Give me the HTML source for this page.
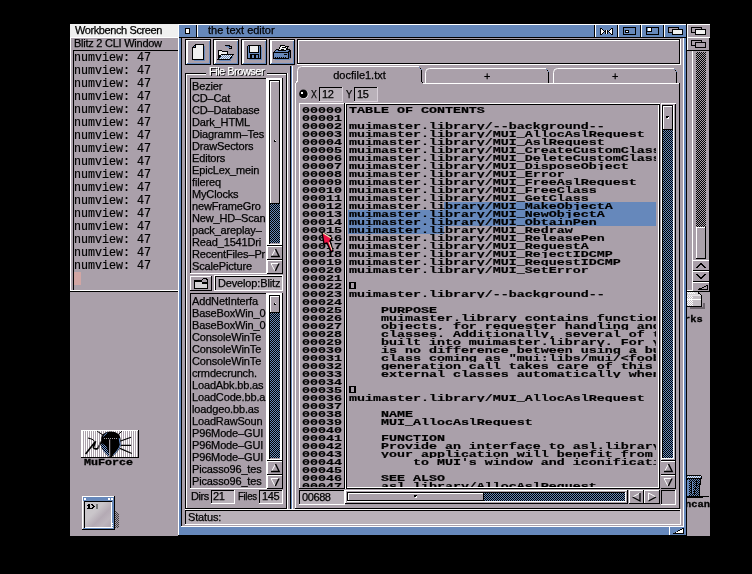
<!DOCTYPE html>
<html><head><meta charset="utf-8"><title>the text editor</title>
<style>
html,body{margin:0;padding:0;background:#000;}
body{width:752px;height:574px;overflow:hidden;position:relative;font-family:"Liberation Sans",sans-serif;}
#root{position:absolute;left:0;top:0;width:752px;height:574px;overflow:hidden;background:#000;will-change:transform;}
#root div,#root svg{position:absolute;}
.s{font:11px/13px "Liberation Sans",sans-serif;letter-spacing:-0.4px;color:#000;white-space:nowrap;-webkit-text-stroke:0.25px #000;}
.cli{font:13px/13px "Liberation Mono",monospace;color:#000;white-space:pre;-webkit-text-stroke:0.2px #000;transform:scaleX(0.897);transform-origin:0 0;}
.tp{font:bold 9.7px/9px "Liberation Mono",monospace;color:#000;white-space:pre;-webkit-text-stroke:0.2px #000;transform:scaleX(1.3746);transform-origin:0 0;height:9px;left:0;top:0;}
.ln{height:8px;overflow:hidden;}
.tz{font:bold 10.6px/10px "Liberation Mono",monospace;color:#000;white-space:pre;-webkit-text-stroke:0.3px #000;transform-origin:0 0;}
</style></head><body><div id="root">
<div style="left:70px;top:24px;width:640px;height:512px;background:#aaa0aa;"></div>
<div style="left:70px;top:24px;width:640px;height:13px;background:#f0f0f0;"></div>
<div style="left:70px;top:37px;width:640px;height:1px;background:#ffffff;"></div>
<div class="s" style="left:75px;top:24px;">Workbench Screen</div>
<div style="left:687px;top:24px;width:23px;height:14px;background:#aaa0aa;"></div>
<div style="left:687px;top:24px;width:23px;height:1px;background:#ffffff;"></div>
<div style="left:687px;top:24px;width:1px;height:14px;background:#ffffff;"></div>
<div style="left:687px;top:37px;width:23px;height:1px;background:#ffffff;"></div>
<div style="left:691px;top:27px;width:11px;height:6px;border:1px solid #000000;box-sizing:border-box;background:#aaa0aa;"></div>
<div style="left:695px;top:29px;width:11px;height:6px;border:1px solid #000000;box-sizing:border-box;background:#f0f0f0;"></div>
<div style="left:70px;top:38px;width:1px;height:254px;background:#ffffff;"></div>
<div class="s" style="left:74px;top:37px;letter-spacing:-0.25px;">Blitz 2 CLI Window</div>
<div style="left:73px;top:50px;width:620px;height:1px;background:#000000;"></div>
<div style="left:73px;top:50px;width:1px;height:241px;background:#000000;"></div>
<div style="left:71px;top:290px;width:622px;height:1px;background:#ffffff;"></div>
<div style="left:70px;top:291px;width:640px;height:1px;background:#000000;"></div>
<div style="left:687px;top:38px;width:1px;height:13px;background:#ffffff;"></div>
<div style="left:687px;top:50px;width:23px;height:1px;background:#000000;"></div>
<div style="left:691px;top:40px;width:11px;height:6px;border:1px solid #000000;box-sizing:border-box;background:#aaa0aa;"></div>
<div style="left:695px;top:42px;width:11px;height:6px;border:1px solid #000000;box-sizing:border-box;background:#aaa0aa;"></div>
<div style="left:692px;top:51px;width:1px;height:240px;background:#ffffff;"></div>
<div style="left:709px;top:38px;width:1px;height:254px;background:#000000;"></div>
<div style="left:696px;top:52px;width:10px;height:175px;background-image:conic-gradient(#000000 25%,#aaa0aa 0 50%,#000000 0 75%,#aaa0aa 0);background-size:2px 2px;"></div>
<div style="left:696px;top:227px;width:10px;height:32px;background:#aaa0aa;"></div>
<div style="left:696px;top:227px;width:10px;height:1px;background:#ffffff;"></div>
<div style="left:696px;top:227px;width:1px;height:32px;background:#ffffff;"></div>
<div style="left:696px;top:258px;width:10px;height:1px;background:#000000;"></div>
<div style="left:705px;top:227px;width:1px;height:32px;background:#000000;"></div>
<div style="left:693px;top:260px;width:16px;height:1px;background:#ffffff;"></div>
<div style="left:693px;top:271px;width:16px;height:1px;background:#ffffff;"></div>
<div style="left:693px;top:282px;width:16px;height:1px;background:#ffffff;"></div>
<div style="left:693px;top:270px;width:16px;height:1px;background:#000000;"></div>
<div style="left:693px;top:281px;width:16px;height:1px;background:#000000;"></div>
<svg style="left:693px;top:260px" width="17" height="31" viewBox="0 0 17 31" shape-rendering="crispEdges"><path d="M3.5 8 L8 3.5 L12.5 8" fill="none" stroke="#000000" stroke-width="2"/><path d="M3.5 14 L8 18.5 L12.5 14" fill="none" stroke="#000000" stroke-width="2"/><path d="M5.5 29.5 H14.5 V25.5 Z" fill="#aaa0aa" stroke="#000000" stroke-width="1"/></svg>
<div class="cli" style="left:74px;top:51px;">numview: 47</div>
<div class="cli" style="left:74px;top:64px;">numview: 47</div>
<div class="cli" style="left:74px;top:77px;">numview: 47</div>
<div class="cli" style="left:74px;top:90px;">numview: 47</div>
<div class="cli" style="left:74px;top:103px;">numview: 47</div>
<div class="cli" style="left:74px;top:116px;">numview: 47</div>
<div class="cli" style="left:74px;top:129px;">numview: 47</div>
<div class="cli" style="left:74px;top:142px;">numview: 47</div>
<div class="cli" style="left:74px;top:155px;">numview: 47</div>
<div class="cli" style="left:74px;top:168px;">numview: 47</div>
<div class="cli" style="left:74px;top:181px;">numview: 47</div>
<div class="cli" style="left:74px;top:194px;">numview: 47</div>
<div class="cli" style="left:74px;top:207px;">numview: 47</div>
<div class="cli" style="left:74px;top:220px;">numview: 47</div>
<div class="cli" style="left:74px;top:233px;">numview: 47</div>
<div class="cli" style="left:74px;top:246px;">numview: 47</div>
<div class="cli" style="left:74px;top:259px;">numview: 47</div>
<div style="left:74px;top:272px;width:7px;height:13px;background:#d2a6a4;"></div>
<svg style="left:687px;top:292px" width="23" height="18" viewBox="0 0 23 18" shape-rendering="crispEdges"><defs><pattern id="dl" width="2" height="2" patternUnits="userSpaceOnUse"><rect width="1" height="1" fill="#ffffff"/><rect x="1" y="1" width="1" height="1" fill="#ffffff"/></pattern></defs><path d="M16 11 H18 V17 H3 V15 H16 Z" fill="#6e666e"/><path d="M0 0 H11 L15 3 V15 H0 Z" fill="#c4bec4"/><path d="M0 0 H11 L14 3 H0 Z" fill="#d8d4d8"/><rect x="0" y="0" width="8" height="2" fill="url(#dl)"/><rect x="0" y="4" width="6" height="10" fill="url(#dl)"/><path d="M0 7.5H14" stroke="#ffffff"/><path d="M0 3.5H14" stroke="#e8e4e8"/><path d="M11 0.5 L14.5 3.5 V15M0 14.5H15" stroke="#000000" fill="none"/></svg>
<div style="left:687px;top:312px;width:23px;height:14px;overflow:hidden"><div class="tz" style="left:-2.8px;top:3px;font-size:9.6px;transform:scaleX(1.08);">rks</div></div>
<svg style="left:687px;top:475px" width="23" height="24" viewBox="0 0 23 24" shape-rendering="crispEdges"><rect x="0" y="1" width="14" height="3" fill="url(#dw)"/><path d="M0 4 H14 L12.5 21 H0 Z" fill="url(#dk)"/><rect x="0" y="5" width="2" height="16" fill="#6688bb"/><path d="M0 0.5H14M14.5 1V4M0 3.5H15M13.5 4V9M12.5 9V21M0 21.5H22M0 22.5H16" stroke="#000000" fill="none"/><path d="M4.5 7V19M9 6V12" stroke="#000000"/><path d="M5.5 7V19" stroke="#6688bb"/><path d="M8.5 12 L7.5 19" stroke="#000000"/></svg>
<div style="left:687px;top:497px;width:23px;height:14px;overflow:hidden"><div class="tz" style="left:-2.3px;top:2.5px;font-size:9.6px;transform:scaleX(1.09);">ncan</div></div>
<div style="left:81px;top:430px;width:58px;height:28px;background-image:repeating-linear-gradient(90deg,#aaa0aa 0 1px,#ffffff 1px 2px);"></div>
<div style="left:81px;top:430px;width:58px;height:1px;background:#ffffff;"></div>
<div style="left:81px;top:430px;width:1px;height:28px;background:#ffffff;"></div>
<div style="left:82px;top:430px;width:1px;height:28px;background:#ffffff;"></div>
<div style="left:81px;top:457px;width:58px;height:1px;background:#000000;"></div>
<div style="left:138px;top:430px;width:1px;height:28px;background:#000000;"></div>
<svg style="left:81px;top:430px" width="58" height="28" viewBox="0 0 58 28"><defs><pattern id="dz" width="2" height="2" patternUnits="userSpaceOnUse"><rect width="2" height="2" fill="#000000"/><rect width="1" height="1" fill="#7aa0dc"/><rect x="1" y="1" width="1" height="1" fill="#7aa0dc"/></pattern></defs><g stroke="#000000" stroke-width="1" fill="none"><path d="M22.9 5.6 L16.2 1.2 M36.5 5.2 L40.9 1.2"/><path d="M38.9 11.2 L50.1 7.2 M39.7 15.4 H50.1 M38.9 18.4 L50.9 23.5" stroke-width="1.2"/><path d="M4.6 23.9 L14.6 11.2 M14.6 11.2 L12.4 17.6 Q13.6 19.6 16.8 18.4 L20.6 11.4" stroke-width="1.6"/><path d="M7 8 L11 9.2 L13.4 11" stroke-width="1"/><path d="M19 12 L17.5 19" stroke="#777077" stroke-width="1"/></g><path d="M29.7 1.4 C35.5 1.4 39.6 4.5 39.6 9.5 V15.5 C39.6 19 34 24 30.9 26.9 H28.3 C25 24 20.2 19 20.2 15.5 V9.5 C20.2 4.5 24 1.4 29.7 1.4Z" fill="#000000"/><path d="M20.2 13 V15.5 C20.2 19 25 24 27.8 26.6 L28.2 24.5 L25.2 16 Z" fill="url(#dz)"/><path d="M38.2 8.2 L39.3 14.8 C38.5 18.5 35 22 32.3 25.2" stroke="#6f96d4" stroke-width="1" fill="none"/><path d="M22.4 6.4 L26.3 2.5" stroke="#6f96d4" stroke-width="1" fill="none"/><path d="M28.7 9.5 V26.5" stroke="#c8c0c8" stroke-width="1"/><path d="M23 8.5 H36" stroke="#a8a0a8" stroke-width="1" stroke-dasharray="1 1"/></svg>
<div class="tz" style="left:84px;top:458px;font-size:9.6px;transform:scaleX(1.215);">MuForce</div>
<div style="left:82px;top:496px;width:33px;height:34px;background:#c9c5c9;"></div>
<div style="left:85px;top:502px;width:26px;height:25px;background:linear-gradient(135deg,#cac6ca 0 38%,#b4aab4 62%,#bdb5bd 80%,#b0a6b0 100%);"></div>
<div style="left:83px;top:497px;width:31px;height:4px;background:#6688bb;"></div>
<div style="left:82px;top:496px;width:33px;height:1px;background:#ffffff;"></div>
<div style="left:82px;top:496px;width:1px;height:34px;background:#ffffff;"></div>
<div style="left:84px;top:501px;width:28px;height:1px;background:#000000;"></div>
<div style="left:84px;top:501px;width:1px;height:27px;background:#000000;"></div>
<div style="left:112px;top:501px;width:2px;height:27px;background:#6688bb;"></div>
<div style="left:111px;top:502px;width:1px;height:26px;background:#ffffff;"></div>
<div style="left:85px;top:527px;width:27px;height:1px;background:#ffffff;"></div>
<div style="left:83px;top:528px;width:31px;height:1px;background:#6688bb;"></div>
<div style="left:82px;top:529px;width:33px;height:1px;background:#000000;"></div>
<div style="left:114px;top:496px;width:1px;height:34px;background:#000000;"></div>
<div style="left:84px;top:498px;width:2px;height:2px;background:#ffffff;"></div>
<div style="left:108px;top:498px;width:2px;height:2px;background:#ffffff;"></div>
<div style="left:111px;top:498px;width:2px;height:2px;background:#ffffff;"></div>
<div style="left:112px;top:523px;width:1px;height:1px;background:#ffffff;"></div>
<div style="left:112px;top:525px;width:1px;height:1px;background:#ffffff;"></div>
<div style="left:112px;top:527px;width:1px;height:1px;background:#ffffff;"></div>
<svg style="left:82px;top:496px" width="38" height="34" viewBox="0 0 38 34" shape-rendering="crispEdges"><defs><pattern id="ds" width="2" height="2" patternUnits="userSpaceOnUse"><rect width="1" height="1" fill="#403c40"/><rect x="1" y="1" width="1" height="1" fill="#403c40"/></pattern></defs><path d="M33 14 L37 19 V32 H33 Z" fill="url(#ds)"/><g fill="#000"><rect x="6" y="8" width="1" height="1"/><rect x="7" y="8" width="1" height="1"/><rect x="5" y="9" width="1" height="1"/><rect x="6" y="9" width="1" height="1"/><rect x="7" y="9" width="1" height="1"/><rect x="6" y="10" width="1" height="1"/><rect x="7" y="10" width="1" height="1"/><rect x="6" y="11" width="1" height="1"/><rect x="7" y="11" width="1" height="1"/><rect x="5" y="12" width="1" height="1"/><rect x="6" y="12" width="1" height="1"/><rect x="7" y="12" width="1" height="1"/><rect x="8" y="12" width="1" height="1"/><rect x="9" y="8" width="1" height="1"/><rect x="10" y="8" width="1" height="1"/><rect x="10" y="9" width="1" height="1"/><rect x="11" y="9" width="1" height="1"/><rect x="11" y="10" width="1" height="1"/><rect x="12" y="10" width="1" height="1"/><rect x="10" y="11" width="1" height="1"/><rect x="11" y="11" width="1" height="1"/><rect x="9" y="12" width="1" height="1"/><rect x="10" y="12" width="1" height="1"/></g><rect x="14" y="8" width="2" height="5" fill="#777"/></svg>
<div style="left:178px;top:24px;width:509px;height:512px;background:#aaa0aa;"></div>
<div style="left:178px;top:24px;width:509px;height:14px;background:#6688bb;"></div>
<div style="left:178px;top:24px;width:509px;height:1px;background:#ffffff;"></div>
<div style="left:178px;top:37px;width:509px;height:1px;background:#000000;"></div>
<div style="left:178px;top:24px;width:1px;height:512px;background:#ffffff;"></div>
<div style="left:179px;top:38px;width:2px;height:489px;background:#6688bb;"></div>
<div style="left:181px;top:38px;width:1px;height:489px;background:#000000;"></div>
<div style="left:683px;top:38px;width:1px;height:489px;background:#ffffff;"></div>
<div style="left:684px;top:38px;width:2px;height:489px;background:#6688bb;"></div>
<div style="left:686px;top:24px;width:1px;height:512px;background:#000000;"></div>
<div style="left:181px;top:526px;width:503px;height:1px;background:#ffffff;"></div>
<div style="left:179px;top:527px;width:507px;height:8px;background:#6688bb;"></div>
<div style="left:178px;top:535px;width:509px;height:1px;background:#000000;"></div>
<div style="left:669px;top:527px;width:1px;height:8px;background:#ffffff;"></div>
<svg style="left:670px;top:527px" width="16" height="8" viewBox="0 0 16 8" shape-rendering="crispEdges"><path d="M2 7 H14 V0.5 Z" fill="#000000"/><path d="M5 6 H13 V2 Z" fill="#ffffff"/></svg>
<div style="left:196px;top:25px;width:1px;height:12px;background:#000000;"></div>
<div style="left:197px;top:25px;width:1px;height:12px;background:#ffffff;"></div>
<div style="left:185px;top:28px;width:5px;height:6px;background:#ffffff;border:1px solid #000000;box-sizing:border-box;"></div>
<div class="s" style="left:208px;top:24px;letter-spacing:0;">the text editor</div>
<div style="left:594px;top:25px;width:1px;height:12px;background:#000000;"></div>
<div style="left:595px;top:25px;width:1px;height:12px;background:#ffffff;"></div>
<div style="left:617px;top:25px;width:1px;height:12px;background:#000000;"></div>
<div style="left:618px;top:25px;width:1px;height:12px;background:#ffffff;"></div>
<div style="left:640px;top:25px;width:1px;height:12px;background:#000000;"></div>
<div style="left:641px;top:25px;width:1px;height:12px;background:#ffffff;"></div>
<div style="left:663px;top:25px;width:1px;height:12px;background:#000000;"></div>
<div style="left:664px;top:25px;width:1px;height:12px;background:#ffffff;"></div>
<svg style="left:595px;top:24px" width="92" height="14" viewBox="0 0 92 14" shape-rendering="crispEdges"><path d="M5.5 4V11M17.5 4V11" stroke="#000000"/><path d="M6 5 H7 V6 H8 V7 H9 V8 H8 V9 H7 V10 H6 Z" fill="#ffffff"/><path d="M17 5 H16 V6 H15 V7 H14 V8 H15 V9 H16 V10 H17 Z" fill="#ffffff"/><path d="M6 4 H7 V5 H8 V6 H9 V7 H10 V8 H9 V9 H8 V10 H7 V11 H6 V10 H7 V9 H8 V8 H9 V7 H8 V6 H7 V5 H6Z" fill="#000000"/><path d="M17 4 H16 V5 H15 V6 H14 V7 H13 V8 H14 V9 H15 V10 H16 V11 H17 V10 H16 V9 H15 V8 H14 V7 H15 V6 H16 V5 H17Z" fill="#000000"/><rect x="10" y="6" width="3" height="4" fill="#000000"/><rect x="11" y="6" width="1" height="4" fill="#ffffff"/><rect x="28.5" y="3.5" width="12" height="7" fill="#6688bb" stroke="#000000"/><rect x="30.5" y="6.5" width="3" height="2" fill="#ffffff" stroke="#000000"/><rect x="51.5" y="3.5" width="12" height="7" fill="#6688bb" stroke="#000000"/><rect x="51.5" y="3.5" width="5" height="4" fill="#6688bb" stroke="#000000"/><rect x="53" y="4" width="3" height="3" fill="#ffffff"/><rect x="73.5" y="3.5" width="10" height="5" fill="#aaa0aa" stroke="#000000"/><rect x="77.5" y="5.5" width="10" height="5" fill="#f0f0f0" stroke="#000000"/></svg>
<svg width="0" height="0" style="left:0;top:0"><defs><pattern id="dw" width="2" height="2" patternUnits="userSpaceOnUse"><rect width="2" height="2" fill="#6688bb"/><rect width="1" height="1" fill="#f0f0f0"/><rect x="1" y="1" width="1" height="1" fill="#f0f0f0"/></pattern><pattern id="dk" width="2" height="2" patternUnits="userSpaceOnUse"><rect width="2" height="2" fill="#6688bb"/><rect width="1" height="1" fill="#000000"/><rect x="1" y="1" width="1" height="1" fill="#000000"/></pattern></defs></svg>
<div style="left:185px;top:39px;width:26px;height:26px;background:#aaa0aa;"></div>
<div style="left:185px;top:39px;width:26px;height:1px;background:#000000;"></div>
<div style="left:185px;top:39px;width:1px;height:26px;background:#000000;"></div>
<div style="left:185px;top:64px;width:26px;height:1px;background:#000000;"></div>
<div style="left:210px;top:39px;width:1px;height:26px;background:#000000;"></div>
<div style="left:186px;top:40px;width:24px;height:1px;background:#ffffff;"></div>
<div style="left:186px;top:40px;width:1px;height:24px;background:#ffffff;"></div>
<div style="left:187px;top:40px;width:1px;height:24px;background:#ffffff;"></div>
<div style="left:187px;top:63px;width:23px;height:1px;background:#6688bb;"></div>
<div style="left:209px;top:41px;width:1px;height:23px;background:#6688bb;"></div>
<svg style="left:185px;top:39px" width="26" height="26" viewBox="0 0 26 26" shape-rendering="crispEdges"><path d="M10.5 5.5 H18.5 V20.5 H7.5 V8.5 Z" fill="#f0f0f0" stroke="#000000"/><path d="M7.5 8.5 H10.5 V5.5" fill="#6688bb" stroke="#000000"/><path d="M19.5 7V21.5H9" stroke="#6688bb" fill="none"/></svg>
<div style="left:213px;top:39px;width:26px;height:26px;background:#aaa0aa;"></div>
<div style="left:213px;top:39px;width:26px;height:1px;background:#000000;"></div>
<div style="left:213px;top:39px;width:1px;height:26px;background:#000000;"></div>
<div style="left:213px;top:64px;width:26px;height:1px;background:#000000;"></div>
<div style="left:238px;top:39px;width:1px;height:26px;background:#000000;"></div>
<div style="left:214px;top:40px;width:24px;height:1px;background:#ffffff;"></div>
<div style="left:214px;top:40px;width:1px;height:24px;background:#ffffff;"></div>
<div style="left:215px;top:40px;width:1px;height:24px;background:#ffffff;"></div>
<div style="left:215px;top:63px;width:23px;height:1px;background:#6688bb;"></div>
<div style="left:237px;top:41px;width:1px;height:23px;background:#6688bb;"></div>
<svg style="left:213px;top:39px" width="26" height="26" viewBox="0 0 26 26" shape-rendering="crispEdges"><path d="M5.5 11.5 H8.5 L9.5 12.5 H14.5 V16 H5.5Z" fill="#f0f0f0" stroke="#000000"/><path d="M5 20 L8 15.5 H20.5 L17 20 Z" fill="url(#dw)"/><path d="M4.5 20.5 L8.5 15.5 H20.5 L16.5 20.5 Z" fill="none" stroke="#000000"/><path d="M5.5 12V19" stroke="#000000"/><path d="M6 21.5H17L20 17.5" stroke="#6688bb" fill="none"/><path d="M11.5 7.5 Q14.5 4.5 17.5 8" stroke="#000000" fill="none" stroke-width="1.2"/><path d="M12.5 8.5 Q14.5 6 16.5 9" stroke="#6688bb" fill="none" stroke-width="1"/><path d="M15.5 9.5 H18.5 V6.5" stroke="#000000" fill="none"/></svg>
<div style="left:241px;top:39px;width:26px;height:26px;background:#aaa0aa;"></div>
<div style="left:241px;top:39px;width:26px;height:1px;background:#000000;"></div>
<div style="left:241px;top:39px;width:1px;height:26px;background:#000000;"></div>
<div style="left:241px;top:64px;width:26px;height:1px;background:#000000;"></div>
<div style="left:266px;top:39px;width:1px;height:26px;background:#000000;"></div>
<div style="left:242px;top:40px;width:24px;height:1px;background:#ffffff;"></div>
<div style="left:242px;top:40px;width:1px;height:24px;background:#ffffff;"></div>
<div style="left:243px;top:40px;width:1px;height:24px;background:#ffffff;"></div>
<div style="left:243px;top:63px;width:23px;height:1px;background:#6688bb;"></div>
<div style="left:265px;top:41px;width:1px;height:23px;background:#6688bb;"></div>
<svg style="left:241px;top:39px" width="26" height="26" viewBox="0 0 26 26" shape-rendering="crispEdges"><path d="M8 20.5 H20.5 V8" stroke="#6688bb" fill="none"/><path d="M7.5 6.5 H19.5 V19.5 H6.5 V7.5 Z" fill="#6688bb" stroke="#000000"/><rect x="9" y="7" width="8.5" height="5.5" fill="#f0f0f0"/><path d="M8.5 7V13.5H17.5V7" stroke="#000000" fill="none"/><rect x="9" y="15" width="9" height="5" fill="#000000"/><rect x="11" y="16" width="1.5" height="3" fill="#6688bb"/><rect x="15" y="16" width="1.5" height="3" fill="#6688bb"/></svg>
<div style="left:269px;top:39px;width:26px;height:26px;background:#aaa0aa;"></div>
<div style="left:269px;top:39px;width:26px;height:1px;background:#000000;"></div>
<div style="left:269px;top:39px;width:1px;height:26px;background:#000000;"></div>
<div style="left:269px;top:64px;width:26px;height:1px;background:#000000;"></div>
<div style="left:294px;top:39px;width:1px;height:26px;background:#000000;"></div>
<div style="left:270px;top:40px;width:24px;height:1px;background:#ffffff;"></div>
<div style="left:270px;top:40px;width:1px;height:24px;background:#ffffff;"></div>
<div style="left:271px;top:40px;width:1px;height:24px;background:#ffffff;"></div>
<div style="left:271px;top:63px;width:23px;height:1px;background:#6688bb;"></div>
<div style="left:293px;top:41px;width:1px;height:23px;background:#6688bb;"></div>
<svg style="left:269px;top:39px" width="26" height="26" viewBox="0 0 26 26" shape-rendering="crispEdges"><path d="M4.5 13.5 L7.5 10.5 H20.5 L21.5 12.5 V18.5 L19.5 19.5 H4.5 Z" fill="#6688bb" stroke="#000000"/><path d="M5 13 H19.5 L21 11.5" stroke="#000000" fill="none"/><path d="M19.5 13V19.5" stroke="#000000"/><path d="M20 13.5V18.5H21V13Z" fill="#3b5a93"/><path d="M11.5 6.5 L19.5 7.5 L16.5 11.5 L9.5 11.5 Z" fill="#f0f0f0" stroke="#000000"/><path d="M12.5 8.5 H17 M11.5 10H15" stroke="#000000"/><path d="M6 18.5H18" stroke="#000000" stroke-dasharray="1 1"/><path d="M15 15.5H18" stroke="#000000"/><path d="M6 20.5H20L22 19" stroke="#6688bb" fill="none"/></svg>
<div style="left:297px;top:39px;width:384px;height:1px;background:#000000;"></div>
<div style="left:297px;top:39px;width:1px;height:26px;background:#000000;"></div>
<div style="left:298px;top:40px;width:382px;height:1px;background:#ffffff;"></div>
<div style="left:298px;top:40px;width:1px;height:24px;background:#ffffff;"></div>
<div style="left:298px;top:63px;width:382px;height:1px;background:#000000;"></div>
<div style="left:679px;top:40px;width:1px;height:24px;background:#000000;"></div>
<div style="left:297px;top:64px;width:384px;height:1px;background:#ffffff;"></div>
<div style="left:680px;top:39px;width:1px;height:26px;background:#ffffff;"></div>
<div style="left:185px;top:73px;width:103px;height:1px;background:#000000;"></div>
<div style="left:185px;top:73px;width:1px;height:437px;background:#000000;"></div>
<div style="left:186px;top:74px;width:101px;height:1px;background:#ffffff;"></div>
<div style="left:186px;top:74px;width:1px;height:435px;background:#ffffff;"></div>
<div style="left:186px;top:508px;width:101px;height:1px;background:#000000;"></div>
<div style="left:286px;top:74px;width:1px;height:435px;background:#000000;"></div>
<div style="left:185px;top:509px;width:103px;height:1px;background:#ffffff;"></div>
<div style="left:287px;top:73px;width:1px;height:437px;background:#ffffff;"></div>
<div style="left:206px;top:68px;width:61px;height:12px;background:#aaa0aa;"></div>
<div class="s" style="left:209px;top:65px;color:#ffffff;text-shadow:1px 1px 0 #000000;-webkit-text-stroke:0.25px #ffffff;letter-spacing:-0.5px;">File Browser</div>
<div style="left:290px;top:66px;width:1px;height:443px;background:#000000;"></div>
<div style="left:291px;top:66px;width:1px;height:443px;background:#6688bb;"></div>
<div style="left:292px;top:66px;width:1px;height:443px;background:#ffffff;"></div>
<div style="left:190px;top:78px;width:77px;height:1px;background:#000000;"></div>
<div style="left:190px;top:78px;width:1px;height:196px;background:#000000;"></div>
<div style="left:190px;top:273px;width:77px;height:1px;background:#ffffff;"></div>
<div style="left:266px;top:78px;width:1px;height:196px;background:#ffffff;"></div>
<div class="s" style="left:192px;top:80px;letter-spacing:-0.15px;width:74px;overflow:hidden;">Bezier</div>
<div class="s" style="left:192px;top:92px;letter-spacing:-0.15px;width:74px;overflow:hidden;">CD–Cat</div>
<div class="s" style="left:192px;top:104px;letter-spacing:-0.15px;width:74px;overflow:hidden;">CD–Database</div>
<div class="s" style="left:192px;top:116px;letter-spacing:-0.15px;width:74px;overflow:hidden;">Dark_HTML</div>
<div class="s" style="left:192px;top:128px;letter-spacing:-0.15px;width:74px;overflow:hidden;">Diagramm–Tes</div>
<div class="s" style="left:192px;top:140px;letter-spacing:-0.15px;width:74px;overflow:hidden;">DrawSectors</div>
<div class="s" style="left:192px;top:152px;letter-spacing:-0.15px;width:74px;overflow:hidden;">Editors</div>
<div class="s" style="left:192px;top:164px;letter-spacing:-0.15px;width:74px;overflow:hidden;">EpicLex_mein</div>
<div class="s" style="left:192px;top:176px;letter-spacing:-0.15px;width:74px;overflow:hidden;">filereq</div>
<div class="s" style="left:192px;top:188px;letter-spacing:-0.15px;width:74px;overflow:hidden;">MyClocks</div>
<div class="s" style="left:192px;top:200px;letter-spacing:-0.15px;width:74px;overflow:hidden;">newFrameGro</div>
<div class="s" style="left:192px;top:212px;letter-spacing:-0.15px;width:74px;overflow:hidden;">New_HD–Scan</div>
<div class="s" style="left:192px;top:224px;letter-spacing:-0.15px;width:74px;overflow:hidden;">pack_areplay–</div>
<div class="s" style="left:192px;top:236px;letter-spacing:-0.15px;width:74px;overflow:hidden;">Read_1541Dri</div>
<div class="s" style="left:192px;top:248px;letter-spacing:-0.15px;width:74px;overflow:hidden;">RecentFiles–Pr</div>
<div class="s" style="left:192px;top:260px;letter-spacing:-0.15px;width:74px;overflow:hidden;">ScalePicture</div>
<div style="left:267px;top:78px;width:2px;height:168px;background:#ffffff;"></div>
<div style="left:267px;top:78px;width:15px;height:1px;background:#ffffff;"></div>
<div style="left:267px;top:79px;width:15px;height:1px;background:#ffffff;"></div>
<div style="left:269px;top:80px;width:1px;height:164px;background:#000000;"></div>
<div style="left:269px;top:80px;width:11px;height:1px;background:#000000;"></div>
<div style="left:270px;top:81px;width:10px;height:162px;background-image:conic-gradient(#000000 25%,#6688bb 0 50%,#000000 0 75%,#6688bb 0);background-size:2px 2px;"></div>
<div style="left:280px;top:80px;width:2px;height:165px;background:#ffffff;"></div>
<div style="left:269px;top:244px;width:13px;height:1px;background:#ffffff;"></div>
<div style="left:282px;top:78px;width:1px;height:168px;background:#000000;"></div>
<div style="left:267px;top:245px;width:16px;height:1px;background:#000000;"></div>
<div style="left:270px;top:81px;width:10px;height:123px;background:#aaa0aa;"></div>
<div style="left:270px;top:81px;width:10px;height:1px;background:#ffffff;"></div>
<div style="left:270px;top:81px;width:1px;height:123px;background:#ffffff;"></div>
<div style="left:270px;top:203px;width:10px;height:1px;background:#000000;"></div>
<div style="left:279px;top:81px;width:1px;height:123px;background:#000000;"></div>
<div style="left:274px;top:140px;width:2px;height:2px;background:#000000;"></div>
<div style="left:275px;top:140px;width:1px;height:1px;background:#ffffff;"></div>
<div style="left:267px;top:246px;width:16px;height:14px;background:#aaa0aa;"></div>
<div style="left:267px;top:246px;width:16px;height:1px;background:#ffffff;"></div>
<div style="left:267px;top:246px;width:1px;height:14px;background:#ffffff;"></div>
<div style="left:267px;top:259px;width:16px;height:1px;background:#000000;"></div>
<div style="left:282px;top:246px;width:1px;height:14px;background:#000000;"></div>
<svg style="left:267px;top:246px" width="16" height="14" viewBox="0 0 16 14"><path d="M8.5 3 L4.5 10.5" stroke="#ffffff" fill="none"/><path d="M8.5 3 L12.2 10.5 H4.0" stroke="#000000" stroke-width="1.4" fill="none"/></svg>
<div style="left:267px;top:260px;width:16px;height:14px;background:#aaa0aa;"></div>
<div style="left:267px;top:260px;width:16px;height:1px;background:#ffffff;"></div>
<div style="left:267px;top:260px;width:1px;height:14px;background:#ffffff;"></div>
<div style="left:267px;top:273px;width:16px;height:1px;background:#000000;"></div>
<div style="left:282px;top:260px;width:1px;height:14px;background:#000000;"></div>
<svg style="left:267px;top:260px" width="16" height="14" viewBox="0 0 16 14"><path d="M12.0 3.5 H4.0 L8.0 11" stroke="#ffffff" fill="none"/><path d="M8.3 11 L12.0 3.5" stroke="#000000" stroke-width="1.4" fill="none"/></svg>
<div style="left:190px;top:293px;width:77px;height:1px;background:#000000;"></div>
<div style="left:190px;top:293px;width:1px;height:196px;background:#000000;"></div>
<div style="left:190px;top:488px;width:77px;height:1px;background:#ffffff;"></div>
<div style="left:266px;top:293px;width:1px;height:196px;background:#ffffff;"></div>
<div class="s" style="left:192px;top:295px;letter-spacing:-0.15px;width:74px;overflow:hidden;">AddNetInterfa</div>
<div class="s" style="left:192px;top:307px;letter-spacing:-0.15px;width:74px;overflow:hidden;">BaseBoxWin_0</div>
<div class="s" style="left:192px;top:319px;letter-spacing:-0.15px;width:74px;overflow:hidden;">BaseBoxWin_0</div>
<div class="s" style="left:192px;top:331px;letter-spacing:-0.15px;width:74px;overflow:hidden;">ConsoleWinTe</div>
<div class="s" style="left:192px;top:343px;letter-spacing:-0.15px;width:74px;overflow:hidden;">ConsoleWinTe</div>
<div class="s" style="left:192px;top:355px;letter-spacing:-0.15px;width:74px;overflow:hidden;">ConsoleWinTe</div>
<div class="s" style="left:192px;top:367px;letter-spacing:-0.15px;width:74px;overflow:hidden;">crmdecrunch.</div>
<div class="s" style="left:192px;top:379px;letter-spacing:-0.15px;width:74px;overflow:hidden;">LoadAbk.bb.as</div>
<div class="s" style="left:192px;top:391px;letter-spacing:-0.15px;width:74px;overflow:hidden;">LoadCode.bb.a</div>
<div class="s" style="left:192px;top:403px;letter-spacing:-0.15px;width:74px;overflow:hidden;">loadgeo.bb.as</div>
<div class="s" style="left:192px;top:415px;letter-spacing:-0.15px;width:74px;overflow:hidden;">LoadRawSoun</div>
<div class="s" style="left:192px;top:427px;letter-spacing:-0.15px;width:74px;overflow:hidden;">P96Mode–GUI</div>
<div class="s" style="left:192px;top:439px;letter-spacing:-0.15px;width:74px;overflow:hidden;">P96Mode–GUI</div>
<div class="s" style="left:192px;top:451px;letter-spacing:-0.15px;width:74px;overflow:hidden;">P96Mode–GUI</div>
<div class="s" style="left:192px;top:463px;letter-spacing:-0.15px;width:74px;overflow:hidden;">Picasso96_tes</div>
<div class="s" style="left:192px;top:475px;letter-spacing:-0.15px;width:74px;overflow:hidden;">Picasso96_tes</div>
<div style="left:267px;top:293px;width:2px;height:168px;background:#ffffff;"></div>
<div style="left:267px;top:293px;width:15px;height:1px;background:#ffffff;"></div>
<div style="left:267px;top:294px;width:15px;height:1px;background:#ffffff;"></div>
<div style="left:269px;top:295px;width:1px;height:164px;background:#000000;"></div>
<div style="left:269px;top:295px;width:11px;height:1px;background:#000000;"></div>
<div style="left:270px;top:296px;width:10px;height:162px;background-image:conic-gradient(#000000 25%,#6688bb 0 50%,#000000 0 75%,#6688bb 0);background-size:2px 2px;"></div>
<div style="left:280px;top:295px;width:2px;height:165px;background:#ffffff;"></div>
<div style="left:269px;top:459px;width:13px;height:1px;background:#ffffff;"></div>
<div style="left:282px;top:293px;width:1px;height:168px;background:#000000;"></div>
<div style="left:267px;top:460px;width:16px;height:1px;background:#000000;"></div>
<div style="left:270px;top:296px;width:10px;height:17px;background:#aaa0aa;"></div>
<div style="left:270px;top:296px;width:10px;height:1px;background:#ffffff;"></div>
<div style="left:270px;top:296px;width:1px;height:17px;background:#ffffff;"></div>
<div style="left:270px;top:312px;width:10px;height:1px;background:#000000;"></div>
<div style="left:279px;top:296px;width:1px;height:17px;background:#000000;"></div>
<div style="left:274px;top:303px;width:2px;height:2px;background:#000000;"></div>
<div style="left:275px;top:303px;width:1px;height:1px;background:#ffffff;"></div>
<div style="left:267px;top:461px;width:16px;height:14px;background:#aaa0aa;"></div>
<div style="left:267px;top:461px;width:16px;height:1px;background:#ffffff;"></div>
<div style="left:267px;top:461px;width:1px;height:14px;background:#ffffff;"></div>
<div style="left:267px;top:474px;width:16px;height:1px;background:#000000;"></div>
<div style="left:282px;top:461px;width:1px;height:14px;background:#000000;"></div>
<svg style="left:267px;top:461px" width="16" height="14" viewBox="0 0 16 14"><path d="M8.5 3 L4.5 10.5" stroke="#ffffff" fill="none"/><path d="M8.5 3 L12.2 10.5 H4.0" stroke="#000000" stroke-width="1.4" fill="none"/></svg>
<div style="left:267px;top:475px;width:16px;height:14px;background:#aaa0aa;"></div>
<div style="left:267px;top:475px;width:16px;height:1px;background:#ffffff;"></div>
<div style="left:267px;top:475px;width:1px;height:14px;background:#ffffff;"></div>
<div style="left:267px;top:488px;width:16px;height:1px;background:#000000;"></div>
<div style="left:282px;top:475px;width:1px;height:14px;background:#000000;"></div>
<svg style="left:267px;top:475px" width="16" height="14" viewBox="0 0 16 14"><path d="M12.0 3.5 H4.0 L8.0 11" stroke="#ffffff" fill="none"/><path d="M8.3 11 L12.0 3.5" stroke="#000000" stroke-width="1.4" fill="none"/></svg>
<div style="left:190px;top:276px;width:22px;height:15px;background:#aaa0aa;"></div>
<div style="left:190px;top:276px;width:22px;height:1px;background:#ffffff;"></div>
<div style="left:190px;top:276px;width:1px;height:15px;background:#ffffff;"></div>
<div style="left:190px;top:290px;width:22px;height:1px;background:#000000;"></div>
<div style="left:211px;top:276px;width:1px;height:15px;background:#000000;"></div>
<svg style="left:190px;top:276px" width="22" height="15" viewBox="0 0 22 15" shape-rendering="crispEdges"><rect x="5" y="6" width="12" height="6" fill="#d6d2d6"/><path d="M11.5 4.5 L13.5 2.5 H16.5 L17.5 4.5 V6" fill="none" stroke="#000000"/><path d="M4 5 H12 M12 6.5 H17" stroke="#000000" stroke-width="2"/><path d="M4.5 4 V12.5 H17.5 V6" fill="none" stroke="#000000"/></svg>
<div style="left:214px;top:275px;width:69px;height:1px;background:#ffffff;"></div>
<div style="left:214px;top:275px;width:1px;height:16px;background:#ffffff;"></div>
<div style="left:215px;top:276px;width:68px;height:15px;background:#b9b1b9;"></div>
<div style="left:215px;top:276px;width:68px;height:1px;background:#000000;"></div>
<div style="left:215px;top:276px;width:1px;height:15px;background:#000000;"></div>
<div style="left:215px;top:290px;width:68px;height:1px;background:#ffffff;"></div>
<div style="left:282px;top:276px;width:1px;height:15px;background:#ffffff;"></div>
<div class="s" style="left:218px;top:277px;letter-spacing:-0.15px;">Develop:Blitz</div>
<div class="s" style="left:191px;top:490px;">Dirs</div>
<div style="left:211px;top:490px;width:24px;height:14px;background:#b9b1b9;"></div>
<div style="left:211px;top:490px;width:24px;height:1px;background:#000000;"></div>
<div style="left:211px;top:490px;width:1px;height:14px;background:#000000;"></div>
<div style="left:211px;top:503px;width:24px;height:1px;background:#ffffff;"></div>
<div style="left:234px;top:490px;width:1px;height:14px;background:#ffffff;"></div>
<div class="s" style="left:213px;top:490px;">21</div>
<div class="s" style="left:238px;top:490px;transform:scaleX(0.88);transform-origin:0 0;">Files</div>
<div style="left:259px;top:490px;width:24px;height:14px;background:#b9b1b9;"></div>
<div style="left:259px;top:490px;width:24px;height:1px;background:#000000;"></div>
<div style="left:259px;top:490px;width:1px;height:14px;background:#000000;"></div>
<div style="left:259px;top:503px;width:24px;height:1px;background:#ffffff;"></div>
<div style="left:282px;top:490px;width:1px;height:14px;background:#ffffff;"></div>
<div class="s" style="left:262px;top:490px;">145</div>
<div style="left:185px;top:509px;width:496px;height:1px;background:#ffffff;"></div>
<div style="left:185px;top:510px;width:496px;height:15px;background:#b9b1b9;"></div>
<div style="left:185px;top:510px;width:496px;height:1px;background:#000000;"></div>
<div style="left:185px;top:510px;width:1px;height:15px;background:#000000;"></div>
<div style="left:185px;top:524px;width:496px;height:1px;background:#ffffff;"></div>
<div style="left:680px;top:510px;width:1px;height:15px;background:#ffffff;"></div>
<div class="s" style="left:188px;top:511px;letter-spacing:-0.15px;">Status:</div>
<svg style="left:297px;top:66px" width="127" height="18" viewBox="0 0 127 18"><path d="M0.5 16 V4.5 Q0.5 0.5 4.5 0.5 H122" fill="none" stroke="#ffffff" stroke-width="1"/></svg>
<div style="left:419px;top:67px;width:1px;height:1px;background:#6688bb;"></div>
<div style="left:420px;top:68px;width:1px;height:1px;background:#000000;"></div>
<div style="left:421px;top:69px;width:1px;height:1px;background:#6688bb;"></div>
<div style="left:421px;top:70px;width:1px;height:12px;background:#000000;"></div>
<div style="left:422px;top:82px;width:1px;height:1px;background:#000000;"></div>
<svg style="left:425px;top:68px" width="126" height="16" viewBox="0 0 126 16"><path d="M0.5 15 V4.5 Q0.5 0.5 4.5 0.5 H121" fill="none" stroke="#ffffff" stroke-width="1"/></svg>
<div style="left:546px;top:69px;width:1px;height:1px;background:#6688bb;"></div>
<div style="left:547px;top:70px;width:1px;height:1px;background:#000000;"></div>
<div style="left:548px;top:71px;width:1px;height:1px;background:#6688bb;"></div>
<div style="left:548px;top:72px;width:1px;height:11px;background:#000000;"></div>
<svg style="left:553px;top:68px" width="126" height="16" viewBox="0 0 126 16"><path d="M0.5 15 V4.5 Q0.5 0.5 4.5 0.5 H121" fill="none" stroke="#ffffff" stroke-width="1"/></svg>
<div style="left:674px;top:69px;width:1px;height:1px;background:#6688bb;"></div>
<div style="left:675px;top:70px;width:1px;height:1px;background:#000000;"></div>
<div style="left:676px;top:71px;width:1px;height:1px;background:#6688bb;"></div>
<div style="left:676px;top:72px;width:1px;height:11px;background:#000000;"></div>
<div class="s" style="left:297px;top:69px;width:125px;text-align:center;letter-spacing:0;">docfile1.txt</div>
<div class="s" style="left:425px;top:70px;width:124px;text-align:center;">+</div>
<div class="s" style="left:553px;top:70px;width:124px;text-align:center;">+</div>
<div style="left:423px;top:83px;width:257px;height:1px;background:#ffffff;"></div>
<div style="left:295px;top:83px;width:1px;height:426px;background:#ffffff;"></div>
<div style="left:296px;top:81px;width:1px;height:2px;background:#ffffff;"></div>
<div style="left:295px;top:508px;width:385px;height:1px;background:#000000;"></div>
<div style="left:679px;top:83px;width:1px;height:426px;background:#000000;"></div>
<svg style="left:299px;top:89px" width="11" height="11" viewBox="0 0 11 11"><circle cx="4.8" cy="5.3" r="4.6" fill="#ffffff"/><circle cx="4.4" cy="4.9" r="4.3" fill="#000000"/><rect x="2" y="3" width="2" height="2" fill="#ffffff"/></svg>
<div class="s" style="left:311px;top:88px;transform:scaleX(0.8);transform-origin:0 0;">X</div>
<div style="left:319px;top:87px;width:24px;height:15px;background:#b9b1b9;"></div>
<div style="left:319px;top:87px;width:24px;height:1px;background:#000000;"></div>
<div style="left:319px;top:87px;width:1px;height:15px;background:#000000;"></div>
<div style="left:319px;top:101px;width:24px;height:1px;background:#d8d0d8;"></div>
<div style="left:342px;top:87px;width:1px;height:15px;background:#d8d0d8;"></div>
<div class="s" style="left:322px;top:88px;">12</div>
<div class="s" style="left:346px;top:88px;transform:scaleX(0.85);transform-origin:0 0;">Y</div>
<div style="left:354px;top:87px;width:24px;height:15px;background:#b9b1b9;"></div>
<div style="left:354px;top:87px;width:24px;height:1px;background:#000000;"></div>
<div style="left:354px;top:87px;width:1px;height:15px;background:#000000;"></div>
<div style="left:354px;top:101px;width:24px;height:1px;background:#d8d0d8;"></div>
<div style="left:377px;top:87px;width:1px;height:15px;background:#d8d0d8;"></div>
<div class="s" style="left:357px;top:88px;">15</div>
<div style="left:299px;top:103px;width:46px;height:1px;background:#ffffff;"></div>
<div style="left:299px;top:103px;width:1px;height:386px;background:#ffffff;"></div>
<div style="left:299px;top:488px;width:46px;height:1px;background:#000000;"></div>
<div style="left:344px;top:103px;width:1px;height:386px;background:#000000;"></div>
<div style="left:345px;top:103px;width:315px;height:1px;background:#ffffff;"></div>
<div style="left:345px;top:103px;width:1px;height:386px;background:#ffffff;"></div>
<div style="left:346px;top:104px;width:313px;height:1px;background:#000000;"></div>
<div style="left:346px;top:104px;width:1px;height:384px;background:#000000;"></div>
<div style="left:347px;top:487px;width:312px;height:1px;background:#ffffff;"></div>
<div style="left:658px;top:105px;width:1px;height:383px;background:#ffffff;"></div>
<div style="left:346px;top:488px;width:314px;height:1px;background:#000000;"></div>
<div style="left:659px;top:104px;width:1px;height:385px;background:#000000;"></div>
<div style="left:444px;top:202px;width:212px;height:8px;background:#6688bb;"></div>
<div style="left:348px;top:210px;width:308px;height:16px;background:#6688bb;"></div>
<div style="left:348px;top:226px;width:96px;height:8px;background:#6688bb;"></div>
<div style="left:300px;top:105px;width:44px;height:382px;overflow:hidden">
<div class="ln" style="left:2px;top:1px;width:42px"><div class="tp">00000</div></div>
<div class="ln" style="left:2px;top:9px;width:42px"><div class="tp">00001</div></div>
<div class="ln" style="left:2px;top:17px;width:42px"><div class="tp">00002</div></div>
<div class="ln" style="left:2px;top:25px;width:42px"><div class="tp">00003</div></div>
<div class="ln" style="left:2px;top:33px;width:42px"><div class="tp">00004</div></div>
<div class="ln" style="left:2px;top:41px;width:42px"><div class="tp">00005</div></div>
<div class="ln" style="left:2px;top:49px;width:42px"><div class="tp">00006</div></div>
<div class="ln" style="left:2px;top:57px;width:42px"><div class="tp">00007</div></div>
<div class="ln" style="left:2px;top:65px;width:42px"><div class="tp">00008</div></div>
<div class="ln" style="left:2px;top:73px;width:42px"><div class="tp">00009</div></div>
<div class="ln" style="left:2px;top:81px;width:42px"><div class="tp">00010</div></div>
<div class="ln" style="left:2px;top:89px;width:42px"><div class="tp">00011</div></div>
<div class="ln" style="left:2px;top:97px;width:42px"><div class="tp">00012</div></div>
<div class="ln" style="left:2px;top:105px;width:42px"><div class="tp">00013</div></div>
<div class="ln" style="left:2px;top:113px;width:42px"><div class="tp">00014</div></div>
<div class="ln" style="left:2px;top:121px;width:42px"><div class="tp">00015</div></div>
<div class="ln" style="left:2px;top:129px;width:42px"><div class="tp">00016</div></div>
<div class="ln" style="left:2px;top:137px;width:42px"><div class="tp">00017</div></div>
<div class="ln" style="left:2px;top:145px;width:42px"><div class="tp">00018</div></div>
<div class="ln" style="left:2px;top:153px;width:42px"><div class="tp">00019</div></div>
<div class="ln" style="left:2px;top:161px;width:42px"><div class="tp">00020</div></div>
<div class="ln" style="left:2px;top:169px;width:42px"><div class="tp">00021</div></div>
<div class="ln" style="left:2px;top:177px;width:42px"><div class="tp">00022</div></div>
<div class="ln" style="left:2px;top:185px;width:42px"><div class="tp">00023</div></div>
<div class="ln" style="left:2px;top:193px;width:42px"><div class="tp">00024</div></div>
<div class="ln" style="left:2px;top:201px;width:42px"><div class="tp">00025</div></div>
<div class="ln" style="left:2px;top:209px;width:42px"><div class="tp">00026</div></div>
<div class="ln" style="left:2px;top:217px;width:42px"><div class="tp">00027</div></div>
<div class="ln" style="left:2px;top:225px;width:42px"><div class="tp">00028</div></div>
<div class="ln" style="left:2px;top:233px;width:42px"><div class="tp">00029</div></div>
<div class="ln" style="left:2px;top:241px;width:42px"><div class="tp">00030</div></div>
<div class="ln" style="left:2px;top:249px;width:42px"><div class="tp">00031</div></div>
<div class="ln" style="left:2px;top:257px;width:42px"><div class="tp">00032</div></div>
<div class="ln" style="left:2px;top:265px;width:42px"><div class="tp">00033</div></div>
<div class="ln" style="left:2px;top:273px;width:42px"><div class="tp">00034</div></div>
<div class="ln" style="left:2px;top:281px;width:42px"><div class="tp">00035</div></div>
<div class="ln" style="left:2px;top:289px;width:42px"><div class="tp">00036</div></div>
<div class="ln" style="left:2px;top:297px;width:42px"><div class="tp">00037</div></div>
<div class="ln" style="left:2px;top:305px;width:42px"><div class="tp">00038</div></div>
<div class="ln" style="left:2px;top:313px;width:42px"><div class="tp">00039</div></div>
<div class="ln" style="left:2px;top:321px;width:42px"><div class="tp">00040</div></div>
<div class="ln" style="left:2px;top:329px;width:42px"><div class="tp">00041</div></div>
<div class="ln" style="left:2px;top:337px;width:42px"><div class="tp">00042</div></div>
<div class="ln" style="left:2px;top:345px;width:42px"><div class="tp">00043</div></div>
<div class="ln" style="left:2px;top:353px;width:42px"><div class="tp">00044</div></div>
<div class="ln" style="left:2px;top:361px;width:42px"><div class="tp">00045</div></div>
<div class="ln" style="left:2px;top:369px;width:42px"><div class="tp">00046</div></div>
<div class="ln" style="left:2px;top:377px;width:42px"><div class="tp">00047</div></div>
</div>
<div style="left:347px;top:105px;width:309px;height:382px;overflow:hidden">
<div class="ln" style="left:2px;top:1px;width:307px"><div class="tp">TABLE OF CONTENTS</div></div>
<div class="ln" style="left:2px;top:17px;width:307px"><div class="tp">muimaster.library/--background--</div></div>
<div class="ln" style="left:2px;top:25px;width:307px"><div class="tp">muimaster.library/MUI_AllocAslRequest</div></div>
<div class="ln" style="left:2px;top:33px;width:307px"><div class="tp">muimaster.library/MUI_AslRequest</div></div>
<div class="ln" style="left:2px;top:41px;width:307px"><div class="tp">muimaster.library/MUI_CreateCustomClass</div></div>
<div class="ln" style="left:2px;top:49px;width:307px"><div class="tp">muimaster.library/MUI_DeleteCustomClass</div></div>
<div class="ln" style="left:2px;top:57px;width:307px"><div class="tp">muimaster.library/MUI_DisposeObject</div></div>
<div class="ln" style="left:2px;top:65px;width:307px"><div class="tp">muimaster.library/MUI_Error</div></div>
<div class="ln" style="left:2px;top:73px;width:307px"><div class="tp">muimaster.library/MUI_FreeAslRequest</div></div>
<div class="ln" style="left:2px;top:81px;width:307px"><div class="tp">muimaster.library/MUI_FreeClass</div></div>
<div class="ln" style="left:2px;top:89px;width:307px"><div class="tp">muimaster.library/MUI_GetClass</div></div>
<div class="ln" style="left:2px;top:97px;width:307px"><div class="tp">muimaster.library/MUI_MakeObjectA</div></div>
<div class="ln" style="left:2px;top:105px;width:307px"><div class="tp">muimaster.library/MUI_NewObjectA</div></div>
<div class="ln" style="left:2px;top:113px;width:307px"><div class="tp">muimaster.library/MUI_ObtainPen</div></div>
<div class="ln" style="left:2px;top:121px;width:307px"><div class="tp">muimaster.library/MUI_Redraw</div></div>
<div class="ln" style="left:2px;top:129px;width:307px"><div class="tp">muimaster.library/MUI_ReleasePen</div></div>
<div class="ln" style="left:2px;top:137px;width:307px"><div class="tp">muimaster.library/MUI_RequestA</div></div>
<div class="ln" style="left:2px;top:145px;width:307px"><div class="tp">muimaster.library/MUI_RejectIDCMP</div></div>
<div class="ln" style="left:2px;top:153px;width:307px"><div class="tp">muimaster.library/MUI_RequestIDCMP</div></div>
<div class="ln" style="left:2px;top:161px;width:307px"><div class="tp">muimaster.library/MUI_SetError</div></div>
<div style="left:2px;top:177px;width:7px;height:7px;border:1px solid #000000;border-left-width:2px;border-right-width:2px;box-sizing:border-box"></div>
<div class="ln" style="left:2px;top:185px;width:307px"><div class="tp">muimaster.library/--background--</div></div>
<div class="ln" style="left:2px;top:201px;width:307px"><div class="tp">    PURPOSE</div></div>
<div class="ln" style="left:2px;top:209px;width:307px"><div class="tp">    muimaster.library contains functions for creating and disposing</div></div>
<div class="ln" style="left:2px;top:217px;width:307px"><div class="tp">    objects, for requester handling and for controlling custom</div></div>
<div class="ln" style="left:2px;top:225px;width:307px"><div class="tp">    classes. Additionally, several of the standard MUI classes are</div></div>
<div class="ln" style="left:2px;top:233px;width:307px"><div class="tp">    built into muimaster.library. For you as a programmer, there</div></div>
<div class="ln" style="left:2px;top:241px;width:307px"><div class="tp">    is no difference between using a builtin class or an external</div></div>
<div class="ln" style="left:2px;top:249px;width:307px"><div class="tp">    class coming as &quot;mui:libs/mui/&lt;foobar&gt;.mui&quot;. The MUI object</div></div>
<div class="ln" style="left:2px;top:257px;width:307px"><div class="tp">    generation call takes care of this situation and loads</div></div>
<div class="ln" style="left:2px;top:265px;width:307px"><div class="tp">    external classes automatically when they are needed.</div></div>
<div style="left:2px;top:281px;width:7px;height:7px;border:1px solid #000000;border-left-width:2px;border-right-width:2px;box-sizing:border-box"></div>
<div class="ln" style="left:2px;top:289px;width:307px"><div class="tp">muimaster.library/MUI_AllocAslRequest</div></div>
<div class="ln" style="left:2px;top:305px;width:307px"><div class="tp">    NAME</div></div>
<div class="ln" style="left:2px;top:313px;width:307px"><div class="tp">    MUI_AllocAslRequest</div></div>
<div class="ln" style="left:2px;top:329px;width:307px"><div class="tp">    FUNCTION</div></div>
<div class="ln" style="left:2px;top:337px;width:307px"><div class="tp">    Provide an interface to asl.library. Using this ensures that</div></div>
<div class="ln" style="left:2px;top:345px;width:307px"><div class="tp">    your application will benefit from future expansions</div></div>
<div class="ln" style="left:2px;top:353px;width:307px"><div class="tp">        to MUI&#x27;s window and iconification handling.</div></div>
<div class="ln" style="left:2px;top:369px;width:307px"><div class="tp">    SEE ALSO</div></div>
<div class="ln" style="left:2px;top:377px;width:307px"><div class="tp">    asl.library/AllocAslRequest</div></div>
</div>
<div style="left:661px;top:103px;width:1px;height:358px;background:#ffffff;"></div>
<div style="left:661px;top:103px;width:15px;height:1px;background:#ffffff;"></div>
<div style="left:662px;top:105px;width:1px;height:354px;background:#000000;"></div>
<div style="left:662px;top:105px;width:11px;height:1px;background:#000000;"></div>
<div style="left:663px;top:106px;width:10px;height:352px;background-image:conic-gradient(#000000 25%,#6688bb 0 50%,#000000 0 75%,#6688bb 0);background-size:2px 2px;"></div>
<div style="left:673px;top:105px;width:1px;height:354px;background:#ffffff;"></div>
<div style="left:662px;top:458px;width:12px;height:1px;background:#ffffff;"></div>
<div style="left:675px;top:104px;width:1px;height:357px;background:#000000;"></div>
<div style="left:661px;top:460px;width:15px;height:1px;background:#000000;"></div>
<div style="left:663px;top:106px;width:10px;height:24px;background:#aaa0aa;"></div>
<div style="left:663px;top:106px;width:10px;height:1px;background:#ffffff;"></div>
<div style="left:663px;top:106px;width:1px;height:24px;background:#ffffff;"></div>
<div style="left:663px;top:129px;width:10px;height:1px;background:#000000;"></div>
<div style="left:672px;top:106px;width:1px;height:24px;background:#000000;"></div>
<div style="left:666px;top:116px;width:3px;height:2px;background:#000000;"></div>
<div style="left:667px;top:117px;width:2px;height:2px;background:#ffffff;"></div>
<div style="left:667px;top:117px;width:1px;height:1px;background:#000000;"></div>
<div style="left:660px;top:461px;width:16px;height:14px;background:#aaa0aa;"></div>
<div style="left:660px;top:461px;width:16px;height:1px;background:#ffffff;"></div>
<div style="left:660px;top:461px;width:1px;height:14px;background:#ffffff;"></div>
<div style="left:660px;top:474px;width:16px;height:1px;background:#000000;"></div>
<div style="left:675px;top:461px;width:1px;height:14px;background:#000000;"></div>
<svg style="left:660px;top:461px" width="16" height="14" viewBox="0 0 16 14"><path d="M8.5 3 L4.5 10.5" stroke="#ffffff" fill="none"/><path d="M8.5 3 L12.2 10.5 H4.0" stroke="#000000" stroke-width="1.4" fill="none"/></svg>
<div style="left:660px;top:475px;width:16px;height:14px;background:#aaa0aa;"></div>
<div style="left:660px;top:475px;width:16px;height:1px;background:#ffffff;"></div>
<div style="left:660px;top:475px;width:1px;height:14px;background:#ffffff;"></div>
<div style="left:660px;top:488px;width:16px;height:1px;background:#000000;"></div>
<div style="left:675px;top:475px;width:1px;height:14px;background:#000000;"></div>
<svg style="left:660px;top:475px" width="16" height="14" viewBox="0 0 16 14"><path d="M12.0 3.5 H4.0 L8.0 11" stroke="#ffffff" fill="none"/><path d="M8.3 11 L12.0 3.5" stroke="#000000" stroke-width="1.4" fill="none"/></svg>
<div style="left:660px;top:461px;width:1px;height:28px;background:#aaa0aa;"></div>
<div style="left:299px;top:490px;width:46px;height:15px;background:#b9b1b9;"></div>
<div style="left:299px;top:490px;width:46px;height:1px;background:#000000;"></div>
<div style="left:299px;top:490px;width:1px;height:15px;background:#000000;"></div>
<div style="left:299px;top:504px;width:46px;height:1px;background:#ffffff;"></div>
<div style="left:344px;top:490px;width:1px;height:15px;background:#ffffff;"></div>
<div class="s" style="left:302px;top:491px;">00688</div>
<div style="left:345px;top:490px;width:283px;height:1px;background:#ffffff;"></div>
<div style="left:345px;top:490px;width:1px;height:14px;background:#ffffff;"></div>
<div style="left:347px;top:492px;width:279px;height:1px;background:#000000;"></div>
<div style="left:347px;top:492px;width:1px;height:10px;background:#000000;"></div>
<div style="left:348px;top:493px;width:277px;height:8px;background-image:conic-gradient(#000000 25%,#6688bb 0 50%,#000000 0 75%,#6688bb 0);background-size:2px 2px;"></div>
<div style="left:347px;top:501px;width:279px;height:1px;background:#ffffff;"></div>
<div style="left:625px;top:492px;width:1px;height:10px;background:#ffffff;"></div>
<div style="left:345px;top:503px;width:283px;height:1px;background:#000000;"></div>
<div style="left:627px;top:490px;width:1px;height:14px;background:#000000;"></div>
<div style="left:348px;top:493px;width:136px;height:8px;background:#aaa0aa;"></div>
<div style="left:348px;top:493px;width:136px;height:1px;background:#ffffff;"></div>
<div style="left:348px;top:493px;width:1px;height:8px;background:#ffffff;"></div>
<div style="left:348px;top:500px;width:136px;height:1px;background:#000000;"></div>
<div style="left:483px;top:493px;width:1px;height:8px;background:#000000;"></div>
<div style="left:414px;top:495px;width:3px;height:2px;background:#000000;"></div>
<div style="left:415px;top:496px;width:2px;height:2px;background:#ffffff;"></div>
<div style="left:415px;top:496px;width:1px;height:1px;background:#000000;"></div>
<div style="left:629px;top:490px;width:15px;height:14px;background:#aaa0aa;"></div>
<div style="left:629px;top:490px;width:15px;height:1px;background:#ffffff;"></div>
<div style="left:629px;top:490px;width:1px;height:14px;background:#ffffff;"></div>
<div style="left:629px;top:503px;width:15px;height:1px;background:#000000;"></div>
<div style="left:643px;top:490px;width:1px;height:14px;background:#000000;"></div>
<svg style="left:629px;top:490px" width="15" height="14" viewBox="0 0 15 14"><path d="M11 3 L3.5 7" stroke="#ffffff" fill="none"/><path d="M3.5 7 L11 11 V3" stroke="#000000" stroke-width="1.3" fill="none"/></svg>
<div style="left:644px;top:490px;width:16px;height:14px;background:#aaa0aa;"></div>
<div style="left:644px;top:490px;width:16px;height:1px;background:#ffffff;"></div>
<div style="left:644px;top:490px;width:1px;height:14px;background:#ffffff;"></div>
<div style="left:644px;top:503px;width:16px;height:1px;background:#000000;"></div>
<div style="left:659px;top:490px;width:1px;height:14px;background:#000000;"></div>
<svg style="left:644px;top:490px" width="16" height="14" viewBox="0 0 16 14"><path d="M4.5 11 V3 L12 7" stroke="#ffffff" fill="none"/><path d="M12 7 L4.5 11" stroke="#000000" stroke-width="1.3" fill="none"/></svg>
<div style="left:661px;top:490px;width:15px;height:1px;background:#000000;"></div>
<div style="left:661px;top:490px;width:1px;height:15px;background:#000000;"></div>
<div style="left:661px;top:504px;width:15px;height:1px;background:#ffffff;"></div>
<div style="left:675px;top:490px;width:1px;height:15px;background:#ffffff;"></div>
<svg style="left:320px;top:230px" width="16" height="24" viewBox="0 0 16 24"><path d="M2 2 L12 8 L10 11 L13 21 L11 22 L7 13 L4 14 Z" fill="#ee1144" stroke="#000000" stroke-width="1.4" stroke-linejoin="round"/><path d="M3 3 L11 8" stroke="#f8e8c0" stroke-width="1.2"/><path d="M9 12 L12 20" stroke="#f8e8c0" stroke-width="1"/></svg>
</div></body></html>
